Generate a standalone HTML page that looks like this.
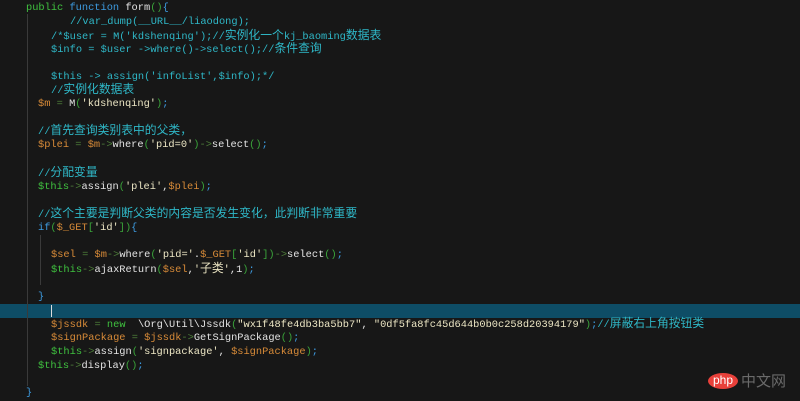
<!DOCTYPE html><html><head><meta charset="utf-8"><style>
body{margin:0;width:800px;height:401px;background:#171717;overflow:hidden;position:relative;font-family:"Liberation Mono","Noto Sans CJK SC",monospace;font-size:10.35px;color:#e4e4e4}
.l{position:absolute;white-space:pre;line-height:13px}
.c{color:#2fb8c8}.k{color:#3d9be0}.g{color:#3fc03f}.v{color:#d88b38}.o{color:#4e7f3a}.s{color:#ece6c4}.p{color:#3d9be0}.q{color:#3aa53a}
.z{font-size:11.8px}
.hl{position:absolute;left:0;top:304px;width:800px;height:14px;background:#0e4d66}
.guide{position:absolute;width:1px;background:#3a3a3a}
</style></head><body>
<div class="hl"></div>
<div class="guide" style="left:27px;top:14px;height:372px"></div>
<div class="guide" style="left:40px;top:235px;height:50px"></div>
<div style="position:absolute;left:51px;top:305px;width:1px;height:12px;background:#ddd"></div>
<div class="l" style="left:26px;top:2px"><span class="g">public</span> <span class="k">function</span> form<span class="q">()</span><span class="k">{</span></div>
<div class="l c" style="left:70px;top:16px">//var_dump(__URL__/liaodong);</div>
<div class="l c" style="left:51px;top:30px">/*$user = M('kdshenqing');//<span class="z">实例化一个</span>kj_baoming<span class="z">数据表</span></div>
<div class="l c" style="left:51px;top:43px">$info = $user -&gt;where()-&gt;select();//<span class="z">条件查询</span></div>
<div class="l c" style="left:51px;top:71px">$this -&gt; assign('infoList',$info);*/</div>
<div class="l c" style="left:51px;top:84px">//<span class="z">实例化数据表</span></div>
<div class="l" style="left:38px;top:98px"><span class="v">$m</span> <span class="o">=</span> M<span class="q">(</span><span class="s">'kdshenqing'</span><span class="q">)</span><span class="p">;</span></div>
<div class="l c" style="left:38px;top:125px">//<span class="z">首先查询类别表中的父类，</span></div>
<div class="l" style="left:38px;top:139px"><span class="v">$plei</span> <span class="o">=</span> <span class="v">$m</span><span class="o">-&gt;</span>where<span class="q">(</span><span class="s">'pid=0'</span><span class="q">)</span><span class="o">-&gt;</span>select<span class="q">()</span><span class="p">;</span></div>
<div class="l c" style="left:38px;top:167px">//<span class="z">分配变量</span></div>
<div class="l" style="left:38px;top:181px"><span class="g">$this</span><span class="o">-&gt;</span>assign<span class="q">(</span><span class="s">'plei'</span>,<span class="v">$plei</span><span class="q">)</span><span class="p">;</span></div>
<div class="l c" style="left:38px;top:208px">//<span class="z">这个主要是判断父类的内容是否发生变化，此判断非常重要</span></div>
<div class="l" style="left:38px;top:222px"><span class="k">if</span><span class="q">(</span><span class="v">$_GET</span><span class="q">[</span><span class="s">'id'</span><span class="q">])</span><span class="k">{</span></div>
<div class="l" style="left:51px;top:249px"><span class="v">$sel</span> <span class="o">=</span> <span class="v">$m</span><span class="o">-&gt;</span>where<span class="q">(</span><span class="s">'pid='</span>.<span class="v">$_GET</span><span class="q">[</span><span class="s">'id'</span><span class="q">])</span><span class="o">-&gt;</span>select<span class="q">()</span><span class="p">;</span></div>
<div class="l" style="left:51px;top:263px"><span class="g">$this</span><span class="o">-&gt;</span>ajaxReturn<span class="q">(</span><span class="v">$sel</span>,<span class="s">'<span class="z">子类</span>'</span>,1<span class="q">)</span><span class="p">;</span></div>
<div class="l" style="left:38px;top:291px"><span class="k">}</span></div>
<div class="l" style="left:51px;top:318px"><span class="v">$jssdk</span> <span class="o">=</span> <span class="g">new</span>  \Org\Util\Jssdk<span class="q">(</span><span class="s">"wx1f48fe4db3ba5bb7"</span>, <span class="s">"0df5fa8fc45d644b0b0c258d20394179"</span><span class="q">)</span><span class="p">;</span><span class="c">//<span class="z">屏蔽右上角按钮类</span></span></div>
<div class="l" style="left:51px;top:332px"><span class="v">$signPackage</span> <span class="o">=</span> <span class="v">$jssdk</span><span class="o">-&gt;</span>GetSignPackage<span class="q">()</span><span class="p">;</span></div>
<div class="l" style="left:51px;top:346px"><span class="g">$this</span><span class="o">-&gt;</span>assign<span class="q">(</span><span class="s">'signpackage'</span>, <span class="v">$signPackage</span><span class="q">)</span><span class="p">;</span></div>
<div class="l" style="left:38px;top:360px"><span class="g">$this</span><span class="o">-&gt;</span>display<span class="q">()</span><span class="p">;</span></div>
<div class="l" style="left:26px;top:387px"><span class="k">}</span></div>
<div style="position:absolute;left:708px;top:373px;width:30px;height:16px;border-radius:50%;background:#e8403a;color:#fff;font:12px 'Liberation Sans',sans-serif;text-align:center;line-height:14px">php</div>
<div style="position:absolute;left:741px;top:372px;color:#6a6a6a;font:15px 'Noto Sans CJK SC',sans-serif;line-height:18px">中文网</div>
</body></html>
